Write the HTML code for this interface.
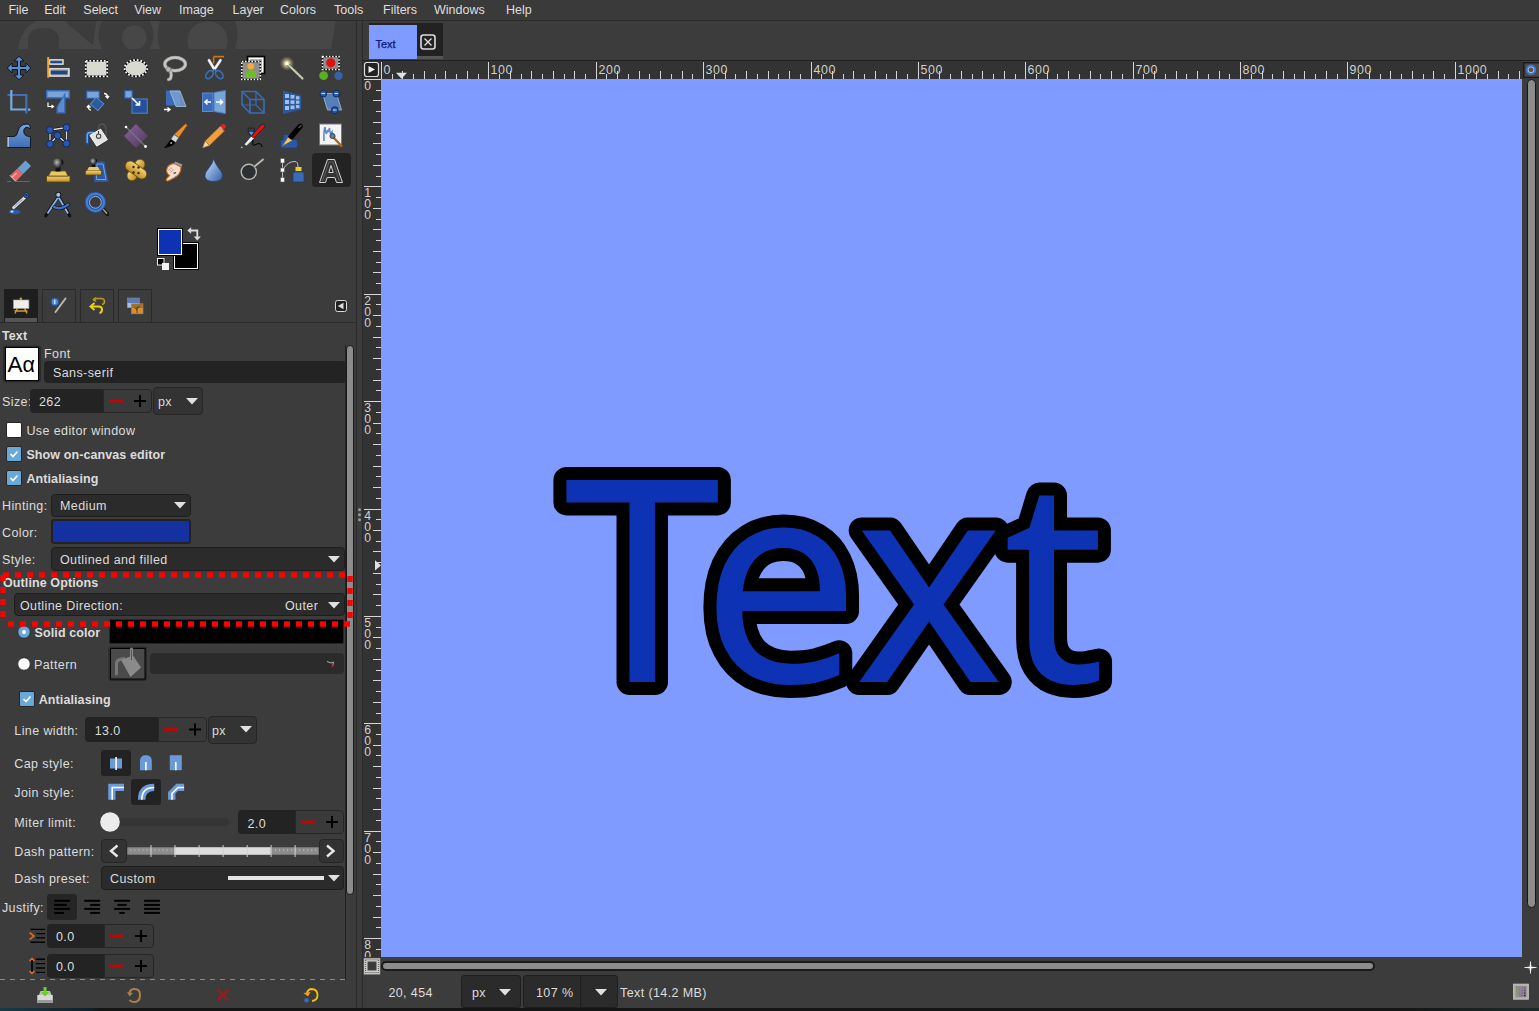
<!DOCTYPE html><html><head><meta charset="utf-8"><style>
html,body{margin:0;padding:0}
body{width:1539px;height:1011px;overflow:hidden;position:relative;background:#3c3c3c;font-family:"Liberation Sans",sans-serif}
.t{position:absolute;white-space:pre}
.r{position:absolute;box-sizing:border-box}
svg{position:absolute;overflow:visible}
</style></head><body>
<div class="r" style="left:0px;top:0px;width:1539px;height:20px;background:#3a3a3a;"></div>
<div class="r" style="left:0px;top:20px;width:1539px;height:1px;background:#2b2b2b;"></div>
<div class="t" style="left:8.4px;top:4.4px;font-size:12.5px;line-height:12.5px;color:#dedede;letter-spacing:0px;">File</div>
<div class="t" style="left:44.2px;top:4.4px;font-size:12.5px;line-height:12.5px;color:#dedede;letter-spacing:0px;">Edit</div>
<div class="t" style="left:83.3px;top:4.4px;font-size:12.5px;line-height:12.5px;color:#dedede;letter-spacing:0px;">Select</div>
<div class="t" style="left:134.2px;top:4.4px;font-size:12.5px;line-height:12.5px;color:#dedede;letter-spacing:0px;">View</div>
<div class="t" style="left:179px;top:4.4px;font-size:12.5px;line-height:12.5px;color:#dedede;letter-spacing:0px;">Image</div>
<div class="t" style="left:232.5px;top:4.4px;font-size:12.5px;line-height:12.5px;color:#dedede;letter-spacing:0px;">Layer</div>
<div class="t" style="left:280px;top:4.4px;font-size:12.5px;line-height:12.5px;color:#dedede;letter-spacing:0px;">Colors</div>
<div class="t" style="left:334px;top:4.4px;font-size:12.5px;line-height:12.5px;color:#dedede;letter-spacing:0px;">Tools</div>
<div class="t" style="left:383px;top:4.4px;font-size:12.5px;line-height:12.5px;color:#dedede;letter-spacing:0px;">Filters</div>
<div class="t" style="left:434px;top:4.4px;font-size:12.5px;line-height:12.5px;color:#dedede;letter-spacing:0px;">Windows</div>
<div class="t" style="left:506px;top:4.4px;font-size:12.5px;line-height:12.5px;color:#dedede;letter-spacing:0px;">Help</div>
<div class="r" style="left:356px;top:21px;width:1px;height:990px;background:#2a2a2a;"></div>
<div class="r" style="left:362px;top:21px;width:1px;height:990px;background:#2a2a2a;"></div>
<div class="r" style="left:173px;top:242px;width:26px;height:28px;background:#000;border:1px solid #000;box-shadow:inset 0 0 0 1px #fff"></div>
<div class="r" style="left:157px;top:228px;width:26px;height:28px;background:#0e32b4;border:1px solid #000;box-shadow:inset 0 0 0 1px #fff"></div>
<div class="r" style="left:4px;top:289px;width:34px;height:33px;background:#1e1e1e;"></div>
<div class="r" style="left:5px;top:318px;width:32px;height:4px;background:#555555;"></div>
<div class="r" style="left:42px;top:289px;width:34px;height:33px;background:#3c3c3c;border:1px solid #2a2a2a;border-bottom:none"></div>
<div class="r" style="left:80px;top:289px;width:34px;height:33px;background:#3c3c3c;border:1px solid #2a2a2a;border-bottom:none"></div>
<div class="r" style="left:118px;top:289px;width:34px;height:33px;background:#3c3c3c;border:1px solid #2a2a2a;border-bottom:none"></div>
<div class="r" style="left:0px;top:322px;width:356px;height:1px;background:#2a2a2a;"></div>
<div class="t" style="left:2px;top:330.4px;font-size:12.5px;line-height:12.5px;color:#dcdcdc;letter-spacing:0.1px;font-weight:bold;">Text</div>
<div class="t" style="left:44px;top:348.4px;font-size:12.5px;line-height:12.5px;color:#dcdcdc;letter-spacing:0.4px;">Font</div>
<div class="r" style="left:44px;top:361px;width:302px;height:22px;background:#232323;border-radius:4px"></div>
<div class="t" style="left:53px;top:367.4px;font-size:12.5px;line-height:12.5px;color:#dcdcdc;letter-spacing:0.4px;">Sans-serif</div>
<div class="t" style="left:2px;top:396.4px;font-size:12.5px;line-height:12.5px;color:#dcdcdc;letter-spacing:0.4px;">Size:</div>
<div class="r" style="left:30px;top:389px;width:73px;height:24px;background:#232323;border-radius:4px 0 0 4px"></div>
<div class="t" style="left:39px;top:396.4px;font-size:12.5px;line-height:12.5px;color:#dcdcdc;letter-spacing:0.4px;">262</div>
<div class="r" style="left:103px;top:389px;width:49px;height:24px;background:#3a3a3a;border:1px solid #262626;border-radius:0 4px 4px 0"></div>
<div class="r" style="left:153px;top:387px;width:50px;height:28px;background:#333333;border:1px solid #262626;border-radius:4px"></div>
<div class="t" style="left:158px;top:396.4px;font-size:12.5px;line-height:12.5px;color:#dcdcdc;letter-spacing:0.4px;">px</div>
<div class="r" style="left:6px;top:422px;width:16px;height:16px;background:#ffffff;border:1px solid #262626;border-radius:2px"></div>
<div class="t" style="left:26.4px;top:425.4px;font-size:12.5px;line-height:12.5px;color:#dcdcdc;letter-spacing:0.4px;">Use editor window</div>
<div class="r" style="left:6px;top:446px;width:16px;height:16px;background:#6aa8d8;border:1px solid #262626;border-radius:2px"></div>
<svg style="left:6px;top:446px" width="16" height="16"><path d="M4.5 8L7 10.5L11.5 5.5" stroke="#fff" stroke-width="1.6" fill="none"/></svg>
<div class="t" style="left:26.4px;top:449.4px;font-size:12.5px;line-height:12.5px;color:#dcdcdc;letter-spacing:0.1px;font-weight:bold;">Show on-canvas editor</div>
<div class="r" style="left:6px;top:470px;width:16px;height:16px;background:#6aa8d8;border:1px solid #262626;border-radius:2px"></div>
<svg style="left:6px;top:470px" width="16" height="16"><path d="M4.5 8L7 10.5L11.5 5.5" stroke="#fff" stroke-width="1.6" fill="none"/></svg>
<div class="t" style="left:26.4px;top:473.4px;font-size:12.5px;line-height:12.5px;color:#dcdcdc;letter-spacing:0.1px;font-weight:bold;">Antialiasing</div>
<div class="t" style="left:2px;top:500.4px;font-size:12.5px;line-height:12.5px;color:#dcdcdc;letter-spacing:0.4px;">Hinting:</div>
<div class="r" style="left:51px;top:494px;width:140px;height:23px;background:#2b2b2b;border:1px solid #1e1e1e;border-radius:4px"></div>
<div class="t" style="left:60px;top:500.4px;font-size:12.5px;line-height:12.5px;color:#dcdcdc;letter-spacing:0.4px;">Medium</div>
<div class="t" style="left:2px;top:527.4px;font-size:12.5px;line-height:12.5px;color:#dcdcdc;letter-spacing:0.4px;">Color:</div>
<div class="r" style="left:51px;top:519px;width:140px;height:25px;background:#1530a0;border:2px solid #222;border-radius:3px"></div>
<div class="t" style="left:2px;top:554.4px;font-size:12.5px;line-height:12.5px;color:#dcdcdc;letter-spacing:0.4px;">Style:</div>
<div class="r" style="left:51px;top:547px;width:294px;height:24px;background:#2b2b2b;border:1px solid #1e1e1e;border-radius:4px"></div>
<div class="t" style="left:60px;top:554.4px;font-size:12.5px;line-height:12.5px;color:#dcdcdc;letter-spacing:0.4px;">Outlined and filled</div>
<div class="t" style="left:3px;top:577.4px;font-size:12.5px;line-height:12.5px;color:#dcdcdc;letter-spacing:0.1px;font-weight:bold;">Outline Options</div>
<div class="r" style="left:14px;top:593px;width:331px;height:23px;background:#2b2b2b;border:1px solid #1e1e1e;border-radius:4px"></div>
<div class="t" style="left:20px;top:600.4px;font-size:12.5px;line-height:12.5px;color:#dcdcdc;letter-spacing:0.4px;">Outline Direction:</div>
<div class="t" style="left:285px;top:600.4px;font-size:12.5px;line-height:12.5px;color:#dcdcdc;letter-spacing:0.4px;">Outer</div>
<svg style="left:17px;top:625px" width="14" height="14"><circle cx="7" cy="7" r="6.3" fill="#6aa8d8" stroke="#2a2a2a"/><circle cx="7" cy="7" r="2" fill="#fff"/></svg>
<div class="t" style="left:34.6px;top:627.4px;font-size:12.5px;line-height:12.5px;color:#dcdcdc;letter-spacing:0.1px;font-weight:bold;">Solid color</div>
<div class="r" style="left:109px;top:619px;width:235px;height:25px;background:#000;border:1px solid #262626;border-radius:2px"></div>
<svg style="left:17px;top:657px" width="14" height="14"><circle cx="7" cy="7" r="6.3" fill="#fff" stroke="#2a2a2a"/></svg>
<div class="t" style="left:34px;top:659.4px;font-size:12.5px;line-height:12.5px;color:#dcdcdc;letter-spacing:0.4px;">Pattern</div>
<div class="r" style="left:150px;top:653px;width:194px;height:21px;background:#2b2b2b;border-radius:4px"></div>
<div class="r" style="left:19px;top:691px;width:16px;height:16px;background:#6aa8d8;border:1px solid #262626;border-radius:2px"></div>
<svg style="left:19px;top:691px" width="16" height="16"><path d="M4.5 8L7 10.5L11.5 5.5" stroke="#fff" stroke-width="1.6" fill="none"/></svg>
<div class="t" style="left:38.7px;top:694.4px;font-size:12.5px;line-height:12.5px;color:#dcdcdc;letter-spacing:0.1px;font-weight:bold;">Antialiasing</div>
<div class="t" style="left:14.3px;top:725.4px;font-size:12.5px;line-height:12.5px;color:#dcdcdc;letter-spacing:0.4px;">Line width:</div>
<div class="r" style="left:85px;top:717px;width:73px;height:25px;background:#232323;border-radius:4px 0 0 4px"></div>
<div class="t" style="left:94.7px;top:725.4px;font-size:12.5px;line-height:12.5px;color:#dcdcdc;letter-spacing:0.4px;">13.0</div>
<div class="r" style="left:158px;top:717px;width:49px;height:25px;background:#3a3a3a;border:1px solid #262626;border-radius:0 4px 4px 0"></div>
<div class="r" style="left:208px;top:716px;width:49px;height:28px;background:#333333;border:1px solid #262626;border-radius:4px"></div>
<div class="t" style="left:212px;top:725.4px;font-size:12.5px;line-height:12.5px;color:#dcdcdc;letter-spacing:0.4px;">px</div>
<div class="t" style="left:14.3px;top:758.4px;font-size:12.5px;line-height:12.5px;color:#dcdcdc;letter-spacing:0.4px;">Cap style:</div>
<div class="r" style="left:101px;top:750px;width:30px;height:26px;background:#222;border-radius:3px"></div>
<div class="t" style="left:14.3px;top:787.4px;font-size:12.5px;line-height:12.5px;color:#dcdcdc;letter-spacing:0.4px;">Join style:</div>
<div class="r" style="left:131px;top:779px;width:30px;height:26px;background:#222;border-radius:3px"></div>
<div class="t" style="left:14.3px;top:817.4px;font-size:12.5px;line-height:12.5px;color:#dcdcdc;letter-spacing:0.4px;">Miter limit:</div>
<div class="r" style="left:110px;top:818px;width:119px;height:8px;background:#353535;border-radius:4px"></div>
<svg style="left:0;top:0" width="1" height="1"><circle cx="110" cy="822" r="9.8" fill="#ececec"/></svg>
<div class="r" style="left:238px;top:810px;width:57px;height:24px;background:#232323;border-radius:4px 0 0 4px"></div>
<div class="t" style="left:247.5px;top:818.4px;font-size:12.5px;line-height:12.5px;color:#dcdcdc;letter-spacing:0.4px;">2.0</div>
<div class="r" style="left:295px;top:810px;width:49px;height:24px;background:#3a3a3a;border:1px solid #262626;border-radius:0 4px 4px 0"></div>
<div class="t" style="left:14.3px;top:846.4px;font-size:12.5px;line-height:12.5px;color:#dcdcdc;letter-spacing:0.4px;">Dash pattern:</div>
<div class="r" style="left:101px;top:839px;width:26px;height:24px;background:#333;border:1px solid #262626;border-radius:4px"></div>
<div class="r" style="left:319px;top:839px;width:25px;height:24px;background:#333;border:1px solid #262626;border-radius:4px"></div>
<div class="t" style="left:14.3px;top:873.4px;font-size:12.5px;line-height:12.5px;color:#dcdcdc;letter-spacing:0.4px;">Dash preset:</div>
<div class="r" style="left:101px;top:866px;width:243px;height:24px;background:#2b2b2b;border:1px solid #1e1e1e;border-radius:4px"></div>
<div class="t" style="left:110px;top:873.4px;font-size:12.5px;line-height:12.5px;color:#dcdcdc;letter-spacing:0.4px;">Custom</div>
<div class="r" style="left:228px;top:876px;width:96px;height:4px;background:#e4e4e4;"></div>
<div class="t" style="left:1.9px;top:902.4px;font-size:12.5px;line-height:12.5px;color:#dcdcdc;letter-spacing:0.4px;">Justify:</div>
<div class="r" style="left:47px;top:894px;width:30px;height:26px;background:#252525;border-radius:3px"></div>
<div class="r" style="left:47px;top:924px;width:57px;height:24px;background:#232323;border-radius:4px 0 0 4px"></div>
<div class="t" style="left:56px;top:931.4px;font-size:12.5px;line-height:12.5px;color:#dcdcdc;letter-spacing:0.4px;">0.0</div>
<div class="r" style="left:104px;top:924px;width:50px;height:24px;background:#3a3a3a;border:1px solid #262626;border-radius:0 4px 4px 0"></div>
<div class="r" style="left:47px;top:954px;width:57px;height:24px;background:#232323;border-radius:4px 0 0 4px"></div>
<div class="t" style="left:56px;top:961.4px;font-size:12.5px;line-height:12.5px;color:#dcdcdc;letter-spacing:0.4px;">0.0</div>
<div class="r" style="left:104px;top:954px;width:50px;height:24px;background:#3a3a3a;border:1px solid #262626;border-radius:0 4px 4px 0"></div>
<div class="r" style="left:345px;top:345px;width:1px;height:635px;background:#222;"></div>
<div class="r" style="left:346px;top:345px;width:8px;height:550px;background:#8c8c8c;border:1px solid #1a1a1a;border-radius:4px"></div>
<svg style="left:0;top:0" width="360" height="330"><defs>
<linearGradient id="gBlue" x1="0" y1="0" x2="0" y2="1"><stop offset="0" stop-color="#79a6dc"/><stop offset="1" stop-color="#3d6db5"/></linearGradient>
<linearGradient id="gGold" x1="0" y1="0" x2="0" y2="1"><stop offset="0" stop-color="#f3d27a"/><stop offset="1" stop-color="#c0901e"/></linearGradient>
<radialGradient id="gGlow"><stop offset="0" stop-color="#fff6d0"/><stop offset="0.35" stop-color="#e8d8a0" stop-opacity="0.8"/><stop offset="1" stop-color="#8a7a50" stop-opacity="0"/></radialGradient>
<radialGradient id="gKnob" cx="0.4" cy="0.3"><stop offset="0" stop-color="#bbb"/><stop offset="1" stop-color="#111"/></radialGradient>
<linearGradient id="gDrop" x1="0" y1="0" x2="1" y2="1"><stop offset="0" stop-color="#cfe4ff"/><stop offset="1" stop-color="#2f5fa8"/></linearGradient>
<linearGradient id="gPurp" x1="0" y1="0" x2="1" y2="1"><stop offset="0" stop-color="#8a62a0"/><stop offset="1" stop-color="#4e3a5a"/></linearGradient>
</defs><path transform="translate(7,56)" d="M12 0.3L17 5H13.5V10.5H19V7L23.7 12L19 17V13.5H13.5V19H17L12 23.7L7 19H10.5V13.5H5V17L0.3 12L5 7V10.5H10.5V5H7Z" fill="#5a8ed2" stroke="#0b1320" stroke-width="1"/><rect x="47.2" y="57.1" width="2" height="20.6" fill="#f0a830"/><rect x="49.2" y="59.1" width="14.7" height="5.8" fill="#8c8c86"/><rect x="49.8" y="59.8" width="13.2" height="4.4" fill="none" stroke="#e8eef8" stroke-width="1"/><rect x="50.4" y="61.2" width="11.6" height="1.8" fill="#1a4690"/><rect x="49.2" y="67.9" width="20.7" height="9" fill="#8c8c86"/><rect x="49.9" y="68.8" width="19" height="7.2" fill="none" stroke="#e8eef8" stroke-width="1.2"/><rect x="50.8" y="70.8" width="16.4" height="3.4" fill="#1a4690"/><rect x="85.8" y="60.8" width="21.4" height="15.6" fill="#d8dad2" stroke="#000" stroke-width="1.8"/><rect x="85.8" y="60.8" width="21.4" height="15.6" fill="none" stroke="#fff" stroke-width="1.8" stroke-dasharray="1.8 1.8"/><ellipse cx="135.9" cy="68.2" rx="11.3" ry="8.2" fill="#d8dad2" stroke="#000" stroke-width="1.8"/><ellipse cx="135.9" cy="68.2" rx="11.3" ry="8.2" fill="none" stroke="#fff" stroke-width="1.8" stroke-dasharray="1.8 1.8"/><g fill="none" stroke-linecap="round"><ellipse cx="175.1" cy="64.1" rx="10.3" ry="6.6" stroke="#8a8a86" stroke-width="3.6"/><ellipse cx="175.1" cy="64.1" rx="10.3" ry="6.6" stroke="#c6c6c2" stroke-width="2.4"/><path d="M170.5 71Q172 75 170.5 78.5Q169.5 79.5 168.5 79.5" stroke="#8a8a86" stroke-width="3.4"/><path d="M170.5 71Q172 75 170.5 78.5Q169.5 79.5 168.5 79.5" stroke="#c6c6c2" stroke-width="2.2"/><circle cx="168.5" cy="69.5" r="2.4" fill="#b8b8b4" stroke="#8a8a86" stroke-width="0.8"/></g><path d="M213.6 56.6H224M213.6 56.6V63.5" stroke="#c86a10" stroke-width="1.6" fill="none"/><path d="M215.5 56.6H224M213.6 58.5V63.5" stroke="#f0a020" stroke-width="0.9" stroke-dasharray="0.9 2.1" fill="none"/><path d="M209 60.3L214.4 69.3M220.4 60.3L214.4 69.3" stroke="#777" stroke-width="3.3" stroke-linecap="round"/><path d="M209 60.3L214.4 69.3M220.4 60.3L214.4 69.3" stroke="#f2f2f2" stroke-width="2.4" stroke-linecap="round"/><ellipse cx="209.5" cy="74.6" rx="4.6" ry="3" transform="rotate(-50 209.5 74.6)" fill="none" stroke="#3a70c0" stroke-width="1.6"/><ellipse cx="219.3" cy="74.6" rx="4.6" ry="3" transform="rotate(50 219.3 74.6)" fill="none" stroke="#3a70c0" stroke-width="1.6"/><path d="M214.4 69.5L212.5 71.5M214.4 69.5L216.3 71.5" stroke="#3a70c0" stroke-width="1.4"/><rect x="247.5" y="56.5" width="17" height="17" fill="#ddd" stroke="#000" stroke-width="1.6"/><rect x="249.5" y="58.5" width="13" height="13" fill="#bbb" stroke="#fff" stroke-width="1"/><rect x="241.8" y="61.5" width="18.5" height="18" fill="#8e8e8e" stroke="#000" stroke-width="1.6"/><rect x="241.8" y="61.5" width="18.5" height="18" fill="none" stroke="#fff" stroke-width="1.6" stroke-dasharray="1.6 1.6"/><path d="M245.5 78Q245.5 70 251 70Q256.5 70 256.5 78Z" fill="#6cc026"/><circle cx="250.8" cy="66.3" r="3.3" fill="#f5a640"/><circle cx="287" cy="63.5" r="7.5" fill="url(#gGlow)"/><path d="M287.5 64L302.5 78.5" stroke="#56584c" stroke-width="3" stroke-linecap="round"/><path d="M287.5 64L302.5 78.5" stroke="#c9ccb4" stroke-width="1.8" stroke-linecap="round"/><circle cx="287" cy="63.5" r="1.8" fill="#fff"/><rect x="322.5" y="56.5" width="16.5" height="13" fill="#8e8e8e" stroke="#000" stroke-width="1.6"/><rect x="322.5" y="56.5" width="16.5" height="13" fill="none" stroke="#fff" stroke-width="1.6" stroke-dasharray="1.6 1.6"/><circle cx="330.8" cy="62.8" r="4.6" fill="#e01010"/><circle cx="323.6" cy="75.7" r="4.4" fill="#58b020"/><circle cx="338.5" cy="75.7" r="4.2" fill="#3562a8"/><path d="M7.5 95H26.3V113.5" fill="none" stroke="#3f6fb8" stroke-width="2.2"/><path d="M11.3 92V109.5H26" fill="none" stroke="#79a8e6" stroke-width="2.2"/><rect x="10.3" y="90" width="2.2" height="2.2" fill="#79a8e6"/><rect x="28" y="108.5" width="2.3" height="2.3" fill="#79a8e6"/><rect x="46" y="90" width="24" height="8.6" fill="#3c6cb8"/><rect x="47.5" y="91.5" width="21" height="5.6" fill="#79a4d8"/><path d="M65.5 92L56.5 107V113.5H65.5Z" fill="#3c6cb8"/><path d="M64 96L58 107V112H64Z" fill="#5b8ad0"/><path d="M48 102.5V106.5H53M51.5 105L53.5 106.5L51.5 108" fill="none" stroke="#fff" stroke-width="1.2"/><rect x="86.5" y="91" width="13" height="7.5" fill="#79a4d8" stroke="#2c5aa0" stroke-width="1.4"/><rect x="92" y="99.5" width="10" height="9" transform="rotate(40 97 104)" fill="#2c5aa0" stroke="#5c8ad0" stroke-width="1"/><path d="M104 93.5Q107.5 93.5 107.5 97.5M105.5 96L107.5 98L109 96" fill="none" stroke="#fff" stroke-width="1.3"/><path d="M91 110Q88 110 88.5 106M86.8 107.5L88.5 105.5L90.5 107.5" fill="none" stroke="#fff" stroke-width="1.3"/><rect x="124.7" y="90.5" width="7.6" height="7.6" fill="#79a4d8" stroke="#2c5aa0" stroke-width="1.2"/><rect x="132" y="99" width="15.3" height="14.2" fill="#24519a" stroke="#4a7cc4" stroke-width="1.2"/><path d="M132 98L139 105M135.5 105H139.5V101" fill="none" stroke="#fff" stroke-width="1.6"/><rect x="166" y="90.5" width="14" height="15" fill="#3c6cb8"/><path d="M170 91H180L186 106.5H176Z" fill="#79a4d8" fill-opacity="0.8" stroke="#a8c0e0" stroke-width="0.8"/><path d="M164 109.5H169.5M167.5 107.5L170 109.5L167.5 111.5" fill="none" stroke="#fff" stroke-width="1.4"/><rect x="202.5" y="93" width="10.5" height="18.5" fill="#3c6cb8" stroke="#5c8ad0" stroke-width="1"/><path d="M214 92.5L225.5 90.5V113.5L214 111.5Z" fill="#79a4d8" stroke="#4a7cc4" stroke-width="1"/><path d="M211 102H205M207.5 99.5L205 102L207.5 104.5" fill="none" stroke="#fff" stroke-width="1.6"/><path d="M216 102H222.5M220 99.5L222.5 102L220 104.5" fill="none" stroke="#fff" stroke-width="1.6"/><g fill="none" stroke="#3a6ab2" stroke-width="1.7"><path d="M242 91.5H256L264 99.5V113H250L242 105Z"/><path d="M242 91.5L250 99.5H264M250 99.5V113"/><path d="M256 91.5V105H242M256 105L264 113" stroke-width="1.2"/></g><path d="M283 90.5L301 95.5V109.5L283 114Z" fill="#2c5aa0"/><g fill="#9cc0ea"><rect x="285" y="94" width="4" height="4"/><rect x="290.5" y="95" width="4" height="3.6"/><rect x="296" y="96.2" width="3.4" height="3.2"/><rect x="285" y="100" width="4" height="4"/><rect x="290.5" y="100.3" width="4" height="3.6"/><rect x="296" y="100.6" width="3.4" height="3.2"/><rect x="285" y="106" width="4" height="4"/><rect x="290.5" y="105.5" width="4" height="3.6"/><rect x="296" y="105" width="3.4" height="3.2"/></g><path d="M322.5 93.5H336.5L341.5 110H327.5Z" fill="#5b8ad0" fill-opacity="0.85" stroke="#a8c0e0" stroke-width="0.8"/><g fill="#2a5aa8" stroke="#0d2a60" stroke-width="1"><circle cx="323.2" cy="93.6" r="3.4"/><circle cx="336.3" cy="93.6" r="3.4"/><circle cx="334.8" cy="110.2" r="3.4"/></g><path d="M321.5 93.5H325M334.5 93.5H338M333 110H336.5" stroke="#fff" stroke-width="0.8"/><path d="M7.5 147.5V136.5H14Q17 136.5 18 131Q20 124 27 124Q31 124.5 30 129Q28 126.5 25.5 127.5Q23 129 24 133Q25 136.5 30.5 136.5V147.5Z" fill="url(#gBlue)" stroke="#0e1826" stroke-width="1"/><path d="M8 147V137" stroke="#fff" stroke-width="1"/><path d="M50 130L66.5 127.5V143.5L57.5 135.5L50 144Z" fill="none" stroke="#111" stroke-width="2.6"/><path d="M50 130L66.5 127.5V143.5L57.5 135.5L50 144Z" fill="none" stroke="#ddd" stroke-width="1.3"/><g fill="#2858b0" stroke="#0b2560" stroke-width="0.9"><circle cx="50" cy="130" r="3.5"/><circle cx="66.5" cy="127.5" r="3.5"/><circle cx="57.5" cy="135.5" r="3.5"/><circle cx="50" cy="144" r="3.5"/><circle cx="66.5" cy="143.5" r="3.5"/></g><path d="M87.2 143V135.2Q87.2 132.4 90 132.4H94" fill="none" stroke="#1e4890" stroke-width="4" stroke-linecap="round"/><path d="M87.2 142.5V135.2Q87.2 132.6 90 132.6H93.5" fill="none" stroke="#70a0e0" stroke-width="1.6" stroke-linecap="round"/><path d="M98.5 131Q98 124 102 124Q106 124 106 131V136" fill="none" stroke="#555550" stroke-width="1.3"/><path d="M89.9 135.4L100.6 129.2L107.4 139.6L96.8 146.1Z" fill="#e4e4e4" stroke="#fafafa" stroke-width="1"/><path d="M98.5 131V134" stroke="#444" stroke-width="1.1"/><circle cx="98.6" cy="136.2" r="2.2" fill="#ddd" stroke="#444" stroke-width="1.1"/><path d="M136 124L148 136L136 148L124 136Z" fill="url(#gPurp)"/><path d="M126 127L145.5 146.5" stroke="#777" stroke-width="1.3"/><circle cx="126" cy="127" r="1.3" fill="#fff"/><circle cx="145.5" cy="146.5" r="1.4" fill="#fff"/><path d="M185.5 123.8L187.3 125.3L178.8 137.6L174 134.4Z" fill="#e8902a" stroke="#8a4a10" stroke-width="0.8"/><path d="M174 134.4L178.8 137.6L175.6 142.6L170.8 139.2Z" fill="#d8d8d8" stroke="#555" stroke-width="0.7"/><path d="M170.8 139.2L175.6 142.6Q172 147.2 164 148Q167.8 143.5 170.8 139.2Z" fill="#000"/><circle cx="171.2" cy="143" r="1" fill="#aaa"/><path d="M205 141L220 126.5L224.5 131L209.5 145.5Z" fill="#f0a040" stroke="#9a5a10" stroke-width="0.8"/><path d="M219.5 127L222.5 124Q225.5 123.5 226 126.5L223.5 130Z" fill="#e82020"/><path d="M205 141L209.5 145.5L202.5 148Z" fill="#f0d8a0" stroke="#8a6a30" stroke-width="0.6"/><rect x="219" y="127" width="3" height="3" transform="rotate(45 220.5 128.5)" fill="#aaa"/><path d="M252.5 137L263 126" stroke="#123" stroke-width="4.4" stroke-linecap="round"/><path d="M252.5 137L263 126" stroke="#ff0a0a" stroke-width="3" stroke-linecap="round"/><path d="M248.3 132.5V128.2H254.2V132.5L251.3 136Z" fill="none" stroke="#1a2a30" stroke-width="1.2"/><path d="M248.8 132L253.8 132L251.3 135.5Z" fill="#5a90e0"/><path d="M244 144.5L251 136.2L254.5 138.5L246.5 146Z" fill="#f0f0ec" stroke="#203038" stroke-width="0.8"/><path d="M243.5 145.5L241.8 147.2" stroke="#203038" stroke-width="1"/><circle cx="241.8" cy="147.3" r="0.9" fill="#9ac0f0"/><path d="M253.2 139.5Q252 145.5 253.5 145.5Q256 144 259 143.5Q262 143.8 262 147" fill="none" stroke="#000" stroke-width="1"/><path d="M283.6 134.5H289.5V139.5H295.5Q297.5 139.5 297.5 141.5V146.5Q297.5 148 296 148H282Q280.5 148 280.5 146.5V141.5Q280.5 139.5 282.5 139.5H283.6Z" fill="#2a58a8" stroke="#1a3a78" stroke-width="0.6"/><path d="M290.8 137.3L300.2 126.2" stroke="#000" stroke-width="5.2" stroke-linecap="round"/><path d="M299 127.5L301 125.5" stroke="#555" stroke-width="1.4" stroke-linecap="round"/><path d="M282.3 146L288 137.2L292.3 140.6Z" fill="#e8c878" stroke="#8a6a20" stroke-width="0.6"/><rect x="319.5" y="124" width="22" height="21" fill="#f4f4f4" stroke="#777" stroke-width="1"/><path d="M324 141Q323.5 131 325 127Q326 138 327.5 130Q328 134 329.5 128Q330 136 332 132Q333 138 335 136" fill="none" stroke="#5a8ad0" stroke-width="1.6"/><path d="M333 137L341.5 146" stroke="#a86a18" stroke-width="2.4" stroke-linecap="round"/><circle cx="332.5" cy="136" r="2.6" fill="#5a7ab0" stroke="#333" stroke-width="0.8"/><path d="M17.5 168.5L25.5 160.5L31 166L23 174Z" fill="#6aa0d0"/><path d="M17.5 168.5L23 174L16 181.5L10 175.5Z" fill="#e06868"/><path d="M10 175.5L12 177.5L16.5 173M12 177.5L16 181.5" stroke="#fff" stroke-width="0.8" fill="none"/><path d="M7 181.5H11M14 181.5H30" stroke="#666" stroke-width="1.2"/><rect x="46.5" y="176" width="23.5" height="6" fill="url(#gGold)" stroke="#5a4010" stroke-width="0.8"/><path d="M48.5 176L51 171H65.5L68 176Z" fill="#e8c868" stroke="#6a5010" stroke-width="0.8"/><path d="M55.5 171.5V166Q52 164 52.5 162Q53 158.5 58 158.5Q63 158.5 63.5 162Q64 164 60.5 166V171.5Z" fill="url(#gKnob)"/><path d="M95 161.5H104.5L108.5 182H94Z" fill="#2c5aa0"/><path d="M97 164H103L106 179.5H96.5Z" fill="none" stroke="#79a4d8" stroke-width="1"/><rect x="85.5" y="170.5" width="16" height="4.5" fill="url(#gGold)" stroke="#5a4010" stroke-width="0.7"/><path d="M87 170.5L89 167H98L100 170.5Z" fill="#e8c868"/><path d="M91.8 167V163Q89.5 162 89.8 160.5Q90.2 158.3 93.5 158.3Q96.8 158.3 97.2 160.5Q97.5 162 95.2 163V167Z" fill="url(#gKnob)"/><g transform="rotate(-55 136 170)"><rect x="124" y="165" width="24" height="10" rx="5" fill="url(#gGold)" stroke="#6a4a10" stroke-width="0.8"/></g><g transform="rotate(35 136 170)"><rect x="124" y="165" width="24" height="10" rx="5" fill="url(#gGold)" stroke="#6a4a10" stroke-width="0.8"/></g><g fill="#3a2a10"><circle cx="133.5" cy="167" r="1.2"/><circle cx="138.5" cy="167.5" r="1.2"/><circle cx="133.5" cy="172.5" r="1.2"/><circle cx="138.5" cy="173" r="1.2"/></g><path d="M175 161.5L182.5 164.5L180.5 168.5L173 165.5Z" fill="#9a9a9a"/><path d="M167.5 167Q171 162.5 175.5 164L181 167Q181 173 177 176L173 178.5L168.5 180.8Q165.5 181.5 166.5 178.8L169.5 175.5Q165 172.5 167.5 167Z" fill="#f0ddd4" stroke="#c06a20" stroke-width="1.1"/><path d="M168.5 168.5L172 172M170 166.8L173.5 170.3M168 171L171 168M170 173L173.5 169.5" stroke="#c09080" stroke-width="0.6"/><path d="M173.5 173.5L176 172.5" stroke="#8a5a20" stroke-width="1.4"/><path d="M213.8 158.5Q214.5 163 219 168.5Q223 173 222.5 176.5Q221.5 181.5 213.8 181.5Q206 181.5 205 176.5Q204.5 173 208.5 168.5Q213 163 213.8 158.5Z" fill="url(#gDrop)" stroke="#1e3e70" stroke-width="0.7"/><circle cx="248.8" cy="171.8" r="7.6" fill="#2b3034" stroke="#b8b8b0" stroke-width="1.4"/><path d="M254.5 166.5L263 159.5" stroke="#666" stroke-width="2.6" stroke-linecap="round"/><path d="M254.5 166.5L263 159.5" stroke="#c8c8b8" stroke-width="1.4" stroke-linecap="round"/><path d="M282.5 161V179.5M282.5 170Q288 161 295 161.5Q298 161.5 298 167" fill="none" stroke="#ccc" stroke-width="0.9"/><g fill="#fff" stroke="#555" stroke-width="0.6"><rect x="280.5" y="158.5" width="4" height="4.5"/><rect x="280.5" y="168" width="4" height="4"/><rect x="280.5" y="177.5" width="4" height="4.5"/></g><rect x="295.5" y="167" width="6" height="4" fill="#f0d020"/><path d="M294.5 172H302.5Q304 172 304 174V182H293V174Q293 172 294.5 172Z" fill="#3a6ab8" stroke="#1a3a70" stroke-width="0.7"/><rect x="312" y="153" width="39" height="34" rx="4" fill="#232323"/><path d="M319.5 182.5L327.5 159.5H334.5L342.5 182.5H336.5L334.8 177.5H327.2L325.5 182.5ZM328.8 172.5H333.2L331 165.5Z" fill="#333" stroke="#e6e6e6" stroke-width="0.9"/><path d="M322.5 181L329 162H333L339.5 181" fill="none" stroke="#777" stroke-width="0.6"/><path d="M13.6 207.6L24.7 197.6" stroke="#333" stroke-width="4.2" stroke-linecap="round"/><path d="M13.6 207.6L24.7 197.6" stroke="#d8d8d4" stroke-width="3" stroke-linecap="round"/><path d="M14.5 206.5L22.5 199.5" stroke="#6a9ae0" stroke-width="1"/><circle cx="26.4" cy="195.2" r="2.6" fill="#3462a8" stroke="#1a3060" stroke-width="1"/><circle cx="26.4" cy="195.2" r="0.9" fill="#0e1e40"/><ellipse cx="14.6" cy="211.9" rx="5.8" ry="2.4" fill="#2a5ab0"/><ellipse cx="12" cy="211.6" rx="1.6" ry="1.1" fill="#cfe0ff"/><path d="M58.4 196.5L45.8 215.8M58.4 196.5L69.8 215.8" stroke="#111" stroke-width="3.2" stroke-linecap="round"/><path d="M58.4 197L47.5 213.5M58.4 197L68 213.5" stroke="#8ab4f0" stroke-width="1.8"/><path d="M53 206.3Q60 211.5 69.5 203.5" stroke="#111" stroke-width="3.8" fill="none"/><path d="M53.3 206.5Q60 210.8 69 204" stroke="#3a70c8" stroke-width="2.4" fill="none"/><circle cx="58.3" cy="194.8" r="2.6" fill="#8ab4f0" stroke="#111" stroke-width="1"/><rect x="57.8" y="193.6" width="1" height="2.4" fill="#f0d0a0"/><path d="M103.2 209.3L107.4 214.2" stroke="#1a1a1a" stroke-width="4" stroke-linecap="round"/><path d="M103.6 209.8L106.6 213.2" stroke="#a8a898" stroke-width="1.4" stroke-linecap="round"/><circle cx="95.4" cy="202.3" r="8.1" fill="none" stroke="#2656a8" stroke-width="5"/><circle cx="95.4" cy="202.3" r="8.6" fill="none" stroke="#4a80d0" stroke-width="2"/><circle cx="95.4" cy="202.3" r="5.9" fill="none" stroke="#c0d4f0" stroke-width="0.7"/></svg>
<div class="r" style="left:369px;top:23px;width:74px;height:36px;background:#222222;"></div>
<div class="r" style="left:369px;top:25px;width:48px;height:34px;background:#7f9bff;"></div>
<div class="r" style="left:417px;top:56px;width:26px;height:3px;background:#555555;"></div>
<div class="t" style="left:375.5px;top:38.7px;font-size:11px;line-height:11px;color:#08176e;letter-spacing:0px;-webkit-text-stroke:0.25px #08176e;">Text</div>
<svg style="left:420px;top:34px" width="16" height="16"><rect x="1" y="1" width="14" height="14" rx="2.5" fill="none" stroke="#ddd" stroke-width="1.6"/><path d="M4.5 4.5L11.5 11.5M11.5 4.5L4.5 11.5" stroke="#ddd" stroke-width="1.4"/></svg>
<div class="r" style="left:362px;top:60px;width:1177px;height:1px;background:#202020;"></div>
<div class="r" style="left:363px;top:61px;width:1160px;height:18px;background:#333333;"></div>
<div class="r" style="left:363px;top:61px;width:18px;height:897px;background:#333333;"></div>
<svg style="left:0;top:0" width="1539" height="1011" font-family="Liberation Sans"><clipPath id="rclip"><rect x="362" y="60" width="1160" height="897"/></clipPath><g clip-path="url(#rclip)"><path d="M381.5 62V79 M392.5 74V79 M402.5 71V79 M413.5 74V79 M424.5 71V79 M435.5 74V79 M445.5 71V79 M456.5 74V79 M467.5 71V79 M478.5 74V79 M488.5 62V79 M499.5 74V79 M510.5 71V79 M521.5 74V79 M531.5 71V79 M542.5 74V79 M553.5 71V79 M564.5 74V79 M574.5 71V79 M585.5 74V79 M596.5 62V79 M606.5 74V79 M617.5 71V79 M628.5 74V79 M639.5 71V79 M649.5 74V79 M660.5 71V79 M671.5 74V79 M682.5 71V79 M692.5 74V79 M703.5 62V79 M714.5 74V79 M725.5 71V79 M735.5 74V79 M746.5 71V79 M757.5 74V79 M768.5 71V79 M778.5 74V79 M789.5 71V79 M800.5 74V79 M811.5 62V79 M821.5 74V79 M832.5 71V79 M843.5 74V79 M853.5 71V79 M864.5 74V79 M875.5 71V79 M886.5 74V79 M896.5 71V79 M907.5 74V79 M918.5 62V79 M929.5 74V79 M939.5 71V79 M950.5 74V79 M961.5 71V79 M972.5 74V79 M982.5 71V79 M993.5 74V79 M1004.5 71V79 M1015.5 74V79 M1025.5 62V79 M1036.5 74V79 M1047.5 71V79 M1057.5 74V79 M1068.5 71V79 M1079.5 74V79 M1090.5 71V79 M1100.5 74V79 M1111.5 71V79 M1122.5 74V79 M1133.5 62V79 M1143.5 74V79 M1154.5 71V79 M1165.5 74V79 M1176.5 71V79 M1186.5 74V79 M1197.5 71V79 M1208.5 74V79 M1219.5 71V79 M1229.5 74V79 M1240.5 62V79 M1251.5 74V79 M1262.5 71V79 M1272.5 74V79 M1283.5 71V79 M1294.5 74V79 M1304.5 71V79 M1315.5 74V79 M1326.5 71V79 M1337.5 74V79 M1347.5 62V79 M1358.5 74V79 M1369.5 71V79 M1380.5 74V79 M1390.5 71V79 M1401.5 74V79 M1412.5 71V79 M1423.5 74V79 M1433.5 71V79 M1444.5 74V79 M1455.5 62V79 M1466.5 74V79 M1476.5 71V79 M1487.5 74V79 M1498.5 71V79 M1508.5 74V79 M1519.5 71V79" stroke="#d6d6d6" stroke-width="1" fill="none"/><text x="383.6" y="74" font-size="12.4" letter-spacing="0.5" fill="#d0d0d0">0</text><text x="490.6" y="74" font-size="12.4" letter-spacing="0.5" fill="#d0d0d0">100</text><text x="598.6" y="74" font-size="12.4" letter-spacing="0.5" fill="#d0d0d0">200</text><text x="705.6" y="74" font-size="12.4" letter-spacing="0.5" fill="#d0d0d0">300</text><text x="813.6" y="74" font-size="12.4" letter-spacing="0.5" fill="#d0d0d0">400</text><text x="920.6" y="74" font-size="12.4" letter-spacing="0.5" fill="#d0d0d0">500</text><text x="1027.6" y="74" font-size="12.4" letter-spacing="0.5" fill="#d0d0d0">600</text><text x="1135.6" y="74" font-size="12.4" letter-spacing="0.5" fill="#d0d0d0">700</text><text x="1242.6" y="74" font-size="12.4" letter-spacing="0.5" fill="#d0d0d0">800</text><text x="1349.6" y="74" font-size="12.4" letter-spacing="0.5" fill="#d0d0d0">900</text><text x="1457.6" y="74" font-size="12.4" letter-spacing="0.5" fill="#d0d0d0">1000</text><path d="M364 79.5H381 M376 90.5H381 M373 100.5H381 M376 111.5H381 M373 122.5H381 M376 133.5H381 M373 143.5H381 M376 154.5H381 M373 165.5H381 M376 176.5H381 M364 186.5H381 M376 197.5H381 M373 208.5H381 M376 219.5H381 M373 229.5H381 M376 240.5H381 M373 251.5H381 M376 262.5H381 M373 272.5H381 M376 283.5H381 M364 294.5H381 M376 304.5H381 M373 315.5H381 M376 326.5H381 M373 337.5H381 M376 347.5H381 M373 358.5H381 M376 369.5H381 M373 380.5H381 M376 390.5H381 M364 401.5H381 M376 412.5H381 M373 423.5H381 M376 433.5H381 M373 444.5H381 M376 455.5H381 M373 466.5H381 M376 476.5H381 M373 487.5H381 M376 498.5H381 M364 509.5H381 M376 519.5H381 M373 530.5H381 M376 541.5H381 M373 551.5H381 M376 562.5H381 M373 573.5H381 M376 584.5H381 M373 594.5H381 M376 605.5H381 M364 616.5H381 M376 627.5H381 M373 637.5H381 M376 648.5H381 M373 659.5H381 M376 670.5H381 M373 680.5H381 M376 691.5H381 M373 702.5H381 M376 713.5H381 M364 723.5H381 M376 734.5H381 M373 745.5H381 M376 755.5H381 M373 766.5H381 M376 777.5H381 M373 788.5H381 M376 798.5H381 M373 809.5H381 M376 820.5H381 M364 831.5H381 M376 841.5H381 M373 852.5H381 M376 863.5H381 M373 874.5H381 M376 884.5H381 M373 895.5H381 M376 906.5H381 M373 917.5H381 M376 927.5H381 M364 938.5H381 M376 949.5H381" stroke="#d6d6d6" stroke-width="1" fill="none"/><text x="364.2" y="89.8" font-size="12.2" fill="#d0d0d0">0</text><text x="364.2" y="196.8" font-size="12.2" fill="#d0d0d0">1</text><text x="364.2" y="207.9" font-size="12.2" fill="#d0d0d0">0</text><text x="364.2" y="219.0" font-size="12.2" fill="#d0d0d0">0</text><text x="364.2" y="304.8" font-size="12.2" fill="#d0d0d0">2</text><text x="364.2" y="315.9" font-size="12.2" fill="#d0d0d0">0</text><text x="364.2" y="327.0" font-size="12.2" fill="#d0d0d0">0</text><text x="364.2" y="411.8" font-size="12.2" fill="#d0d0d0">3</text><text x="364.2" y="422.9" font-size="12.2" fill="#d0d0d0">0</text><text x="364.2" y="434.0" font-size="12.2" fill="#d0d0d0">0</text><text x="364.2" y="519.8" font-size="12.2" fill="#d0d0d0">4</text><text x="364.2" y="530.9" font-size="12.2" fill="#d0d0d0">0</text><text x="364.2" y="542.0" font-size="12.2" fill="#d0d0d0">0</text><text x="364.2" y="626.8" font-size="12.2" fill="#d0d0d0">5</text><text x="364.2" y="637.9" font-size="12.2" fill="#d0d0d0">0</text><text x="364.2" y="649.0" font-size="12.2" fill="#d0d0d0">0</text><text x="364.2" y="733.8" font-size="12.2" fill="#d0d0d0">6</text><text x="364.2" y="744.9" font-size="12.2" fill="#d0d0d0">0</text><text x="364.2" y="756.0" font-size="12.2" fill="#d0d0d0">0</text><text x="364.2" y="841.8" font-size="12.2" fill="#d0d0d0">7</text><text x="364.2" y="852.9" font-size="12.2" fill="#d0d0d0">0</text><text x="364.2" y="864.0" font-size="12.2" fill="#d0d0d0">0</text><text x="364.2" y="948.8" font-size="12.2" fill="#d0d0d0">8</text><text x="364.2" y="959.9" font-size="12.2" fill="#d0d0d0">0</text><text x="364.2" y="971.0" font-size="12.2" fill="#d0d0d0">0</text></g></svg>
<div class="r" style="left:381px;top:79px;width:1141px;height:878px;background:#7f9bff;"></div>
<svg style="left:0;top:0" width="1539" height="1011"><g transform="translate(563.6,682.1) scale(0.283,-0.283)" fill="#0e32b4" stroke="#000" stroke-width="92" stroke-linejoin="round" paint-order="stroke"><path transform="translate(0,0)" d="M323 0H233V635H10V714H545V635H323Z"/>
<path transform="translate(485,0)" d="M292 546Q361 546 410 516Q460 486 486 432Q513 377 513 304V251H146Q148 160 192 112Q237 65 317 65Q368 65 408 74Q447 84 489 102V25Q448 7 408 -2Q368 -10 313 -10Q237 -10 178 21Q120 52 88 114Q55 175 55 264Q55 352 84 415Q114 478 168 512Q221 546 292 546ZM291 474Q228 474 192 434Q155 393 148 321H421Q421 367 407 401Q393 435 364 454Q336 474 291 474Z"/>
<path transform="translate(1026.5,0)" d="M212 274 27 536H127L265 334L402 536H501L316 274L511 0H411L265 214L117 0H18Z"/>
<path transform="translate(1553,0)" d="M264 62Q284 62 305 66Q326 69 339 73V6Q325 -1 299 -6Q273 -10 249 -10Q207 -10 172 4Q136 19 114 55Q92 91 92 156V468H16V510L93 545L128 659H180V536H335V468H180V158Q180 109 204 86Q227 62 264 62Z"/></g></svg>
<div class="r" style="left:1527px;top:79px;width:8.5px;height:829px;background:#8c8c8c;border:1.4px solid #161616;border-radius:5px"></div>
<div class="r" style="left:381px;top:961px;width:994px;height:10px;background:#8c8c8c;border:2px solid #1a1a1a;border-radius:5px"></div>
<div class="t" style="left:388.4px;top:987.4px;font-size:12.5px;line-height:12.5px;color:#dcdcdc;letter-spacing:0.4px;">20, 454</div>
<div class="r" style="left:461px;top:975px;width:60px;height:33px;background:#2b2b2b;border:1px solid #1e1e1e;border-radius:3px"></div>
<div class="t" style="left:472px;top:987.4px;font-size:12.5px;line-height:12.5px;color:#dcdcdc;letter-spacing:0.4px;">px</div>
<div class="r" style="left:523px;top:975px;width:95px;height:33px;background:#2b2b2b;border:1px solid #1e1e1e;border-radius:3px"></div>
<div class="r" style="left:580px;top:975px;width:1px;height:33px;background:#1e1e1e;"></div>
<div class="t" style="left:536px;top:987.4px;font-size:12.5px;line-height:12.5px;color:#dcdcdc;letter-spacing:0.4px;">107 %</div>
<div class="t" style="left:620px;top:987.4px;font-size:12.5px;line-height:12.5px;color:#dcdcdc;letter-spacing:0.4px;">Text (14.2 MB)</div>
<div class="r" style="left:0px;top:1008px;width:1539px;height:3px;background:linear-gradient(90deg,#1a3a44,#102028 90px,#151515 100px,#151515 1400px,#1e2a2a);"></div>
<svg style="left:0;top:0" width="1" height="1"><path d="M186 398H198L192.0 404.5Z" fill="#e0e0e0"/><path d="M174 502H186L180.0 508.5Z" fill="#e0e0e0"/><path d="M328 556H340L334.0 562.5Z" fill="#e0e0e0"/><path d="M328 602H340L334.0 608.5Z" fill="#e0e0e0"/><path d="M240 726H252L246.0 732.5Z" fill="#e0e0e0"/><path d="M328 875H340L334.0 881.5Z" fill="#e0e0e0"/><path d="M499 989H511L505.0 995.5Z" fill="#e0e0e0"/><path d="M595 989H607L601.0 995.5Z" fill="#e0e0e0"/><rect x="109" y="399.7" width="14" height="2.6" fill="#d00000"/><rect x="134" y="400.0" width="12" height="2" fill="#000"/><rect x="139" y="395.0" width="2" height="12" fill="#000"/><rect x="164" y="728.2" width="14" height="2.6" fill="#d00000"/><rect x="189" y="728.5" width="12" height="2" fill="#000"/><rect x="194" y="723.5" width="2" height="12" fill="#000"/><rect x="301" y="820.7" width="14" height="2.6" fill="#d00000"/><rect x="326" y="821.0" width="12" height="2" fill="#000"/><rect x="331" y="816.0" width="2" height="12" fill="#000"/><rect x="110" y="934.7" width="14" height="2.6" fill="#d00000"/><rect x="135" y="935.0" width="12" height="2" fill="#000"/><rect x="140" y="930.0" width="2" height="12" fill="#000"/><rect x="110" y="964.7" width="14" height="2.6" fill="#d00000"/><rect x="135" y="965.0" width="12" height="2" fill="#000"/><rect x="140" y="960.0" width="2" height="12" fill="#000"/></svg>
<svg style="left:0;top:0" width="1539" height="1011" font-family="Liberation Sans"><clipPath id="wclip"><rect x="0" y="21" width="356" height="28"/></clipPath><g clip-path="url(#wclip)"><path d="M17.8 49Q22 27 36.5 21H335.7L331 49Z" fill="#474747"/><path d="M28 49V41Q28 28.1 43.5 28.1Q59 28.1 59 41V49Z" fill="#3c3c3c"/><path d="M64.6 21H96.5L92.7 45.3Z" fill="#3c3c3c"/><circle cx="126" cy="35" r="27.5" fill="#3c3c3c"/><circle cx="134.3" cy="37.5" r="12.3" fill="#474747"/><circle cx="197.5" cy="35" r="40" fill="#3c3c3c"/><circle cx="207.6" cy="41" r="20" fill="#474747"/></g><path d="M190 230.5H197.3V237.5" fill="none" stroke="#dcdcdc" stroke-width="1.8"/><path d="M187.2 230.5L191.2 227.2V233.8Z" fill="#dcdcdc"/><path d="M193.8 236.5H200.8L197.3 240.5Z" fill="#dcdcdc"/><rect x="157.5" y="258.5" width="6.5" height="6.5" fill="#000" stroke="#eee" stroke-width="1"/><rect x="162" y="263" width="7" height="7" fill="#f4f4f4"/><path d="M15 313.5L18 307M27 313.5L24 307M14.5 311H27.5" stroke="#d89a30" stroke-width="1.4" fill="none"/><circle cx="20.8" cy="298.8" r="1.3" fill="#d89a30"/><rect x="13.5" y="300" width="15.4" height="8.4" fill="#eeeeec" stroke="#aaa" stroke-width="0.6"/><circle cx="54.8" cy="301.9" r="3.8" fill="#4a88dd" stroke="#1a4a90" stroke-width="0.7"/><rect x="54.3" y="299.8" width="1" height="4.2" fill="#fff"/><path d="M55.5 312L65.5 298.5" stroke="#444" stroke-width="3" stroke-linecap="round"/><path d="M55.5 312L65.5 298.5" stroke="#bbb" stroke-width="1.8" stroke-linecap="round"/><path d="M94 301Q94 298.5 97 298.5H101Q104.5 298.5 104.5 301.5Q104.5 304 102 304.5" fill="none" stroke="#b89a20" stroke-width="1.6"/><path d="M96 297.5L93.5 299.5L96 301.5" fill="none" stroke="#b89a20" stroke-width="1.6"/><path d="M91 306.5H98.5Q102 306.5 102 309.5Q102 312.5 99.5 313" fill="none" stroke="#f0d000" stroke-width="2"/><path d="M94.5 303L90.5 306.5L94.5 310" fill="none" stroke="#f0d000" stroke-width="2"/><rect x="127.5" y="298" width="12" height="9.5" fill="#5a7ab8" stroke="#888" stroke-width="0.6"/><rect x="127.5" y="303" width="12" height="4.5" fill="#a8c0e0"/><rect x="131.5" y="303.8" width="11.5" height="10" fill="#d89030" stroke="#888" stroke-width="0.7"/><rect x="131.8" y="304" width="11" height="4" fill="#a07030"/><path d="M137 313V307M137 309L139.5 306M137 310L134.5 307.5" stroke="#222" stroke-width="0.7"/><rect x="335.5" y="300.5" width="11" height="11" rx="2" fill="#222" stroke="#dcdcdc" stroke-width="1"/><path d="M343.5 302.8V309.2L337.8 306Z" fill="#dcdcdc"/><rect x="3" y="345.5" width="38" height="37" rx="3" fill="#2a2a2a"/><rect x="5" y="347" width="34" height="34" fill="#000"/><rect x="6" y="348" width="32" height="32" fill="#fff"/><text x="7.6" y="372" font-size="22.5" fill="#000">A</text><text x="22.6" y="372" font-size="21.5" fill="#000">α</text><rect x="108.5" y="646.5" width="38.5" height="34.5" rx="3" fill="#2a2a2a"/><rect x="110" y="648" width="35.5" height="31.5" fill="#000"/><rect x="111" y="649" width="33.5" height="29.5" fill="#4a4a4a"/><path d="M116.5 674V664Q116.5 660 120 659.5L124 658.5" fill="none" stroke="#777" stroke-width="3" stroke-linecap="round"/><path d="M121 660L133 655.5L141 667.5L130.5 677Z" fill="#8a8a8a"/><path d="M131.5 649V661" stroke="#8a8a8a" stroke-width="3" stroke-linecap="round"/><path d="M131.5 649.5V660" stroke="#4a4a4a" stroke-width="0.8"/><path d="M327 661.5L331 663L333.5 662L333 665" stroke="#aaa" stroke-width="1" fill="none"/><circle cx="332.5" cy="666" r="1.2" fill="#c02020"/><rect x="110" y="758.5" width="12" height="10" fill="#6a9ad8"/><rect x="115.3" y="757" width="1.6" height="13" fill="#fff"/><path d="M140 770.3V761Q140 755.2 145.9 755.2Q151.8 755.2 151.8 761V770.3Z" fill="#6a9ad8"/><rect x="145.1" y="762" width="1.6" height="8.3" fill="#fff"/><rect x="169.8" y="755.2" width="12" height="15" fill="#6a9ad8"/><rect x="175" y="762" width="1.6" height="8.3" fill="#fff"/><path d="M108.2 799.7V783.7H124V791H115.5V799.7Z" fill="#6a9ad8"/><path d="M112.2 799.7V787.5H124" fill="none" stroke="#fff" stroke-width="1.6"/><path d="M137.9 799.7Q137.9 783.7 154.2 783.7V791Q145.4 791 145.4 799.7Z" fill="#6a9ad8"/><path d="M141.8 799.7Q141.8 787.5 154.2 787.5" fill="none" stroke="#fff" stroke-width="1.6"/><path d="M168.1 799.7V792L176.4 783.7H184.1V791H178L175.4 793.6V799.7Z" fill="#6a9ad8"/><path d="M172 799.7V793.5L178 787.5H184.1" fill="none" stroke="#fff" stroke-width="1.6"/><rect x="127.3" y="847.3" width="191.4" height="7.4" fill="#8c8c8c"/><rect x="174.5" y="847.3" width="96.1" height="7.4" fill="#dcdcdc"/><path d="M130.3 850H131.3 M134.3 850H135.3 M138.3 850H139.3 M142.4 850H143.4 M146.4 850H147.4 M150.4 850H151.4 M154.4 850H155.4 M158.4 850H159.4 M162.5 850H163.5 M166.5 850H167.5 M170.5 850H171.5 M174.5 850H175.5 M275.0 850H276.0 M279.0 850H280.0 M283.1 850H284.1 M287.1 850H288.1 M291.1 850H292.1 M295.1 850H296.1 M299.1 850H300.1 M303.2 850H304.2 M307.2 850H308.2 M311.2 850H312.2 M315.2 850H316.2" stroke="#cfcfcf" stroke-width="1.2"/><path d="M151.0 845V857 M175.0 845V857 M199.1 845V857 M223.1 845V857 M247.2 845V857 M271.1 845V857 M295.1 845V857" stroke="#d0d0d0" stroke-width="1"/><path d="M117.5 845.5L111 851L117.5 856.5M327 845.5L333.5 851L327 856.5" fill="none" stroke="#e8e8e8" stroke-width="2.4"/><rect x="54.1" y="899.8" width="15.8" height="2" fill="#000"/><rect x="54.1" y="903.9" width="12.8" height="2" fill="#000"/><rect x="54.1" y="907.9" width="15.8" height="2" fill="#000"/><rect x="54.1" y="911.9" width="9.8" height="2" fill="#000"/><rect x="84.3" y="899.8" width="15.8" height="2" fill="#000"/><rect x="90.1" y="903.9" width="10.0" height="2" fill="#000"/><rect x="84.3" y="907.9" width="15.8" height="2" fill="#000"/><rect x="90.1" y="911.9" width="10.0" height="2" fill="#000"/><rect x="114.2" y="899.8" width="15.8" height="2" fill="#000"/><rect x="117.4" y="903.9" width="9.3" height="2" fill="#000"/><rect x="114.2" y="907.9" width="15.8" height="2" fill="#000"/><rect x="119.3" y="911.9" width="5.5" height="2" fill="#000"/><rect x="144.1" y="899.8" width="15.8" height="2" fill="#000"/><rect x="144.1" y="903.9" width="15.8" height="2" fill="#000"/><rect x="144.1" y="907.9" width="15.8" height="2" fill="#000"/><rect x="144.1" y="911.9" width="15.8" height="2" fill="#000"/><path d="M30.4 929.4H45M35.9 933.6H45M35.9 937.9H45M30.4 942.2H45" stroke="#000" stroke-width="1.4"/><path d="M29.5 932.6L34 936L29.5 939.5" fill="none" stroke="#f07020" stroke-width="1.5"/><path d="M35.9 959.2H45M35.9 963.6H45M35.9 968H45M35.9 972.4H45" stroke="#000" stroke-width="1.4"/><path d="M32 960V972" stroke="#000" stroke-width="1.6"/><path d="M29.5 961L32 958.5L34.5 961M29.5 971L32 973.5L34.5 971" fill="none" stroke="#f07020" stroke-width="1.4"/><path d="M39 995L40.5 991H50L51.5 995Z" fill="#bfbfbf"/><rect x="37.3" y="995" width="15.5" height="8" fill="#d8d8d8"/><rect x="37.3" y="1000" width="15.5" height="3" fill="#9a9a9a"/><path d="M43.5 987V992H40.8L45 996.5L49.2 992H46.5V987Z" fill="#6cd020"/><path d="M129.5 994Q129.5 989 134.5 989Q140 989 140 995Q140 1002 134 1002Q131 1002 129.5 1000" fill="none" stroke="#b0804a" stroke-width="2"/><path d="M127 992L129.5 996.5L133 993Z" fill="#b0804a"/><path d="M217.5 989.5L228.5 1000.5M228.5 989.5L217.5 1000.5" stroke="#902020" stroke-width="2.6"/><path d="M307 993Q308 989 312 989Q317.5 989.5 317.5 995Q317.5 1000.5 312 1001" fill="none" stroke="#f8c000" stroke-width="1.8"/><path d="M303.5 993L308 996.5L310.5 992Z" fill="#f8a000"/><circle cx="306.5" cy="1000.3" r="2.2" fill="#3a6ab8"/><path d="M0 979.5H345" stroke="#8a8a8a" stroke-width="1" stroke-dasharray="5 5"/><rect x="364.5" y="62.5" width="14" height="14" rx="2.5" fill="#222" stroke="#dcdcdc" stroke-width="1.2"/><path d="M368.5 66V73L375 69.5Z" fill="#eee"/><rect x="1523.8" y="62.8" width="16" height="14.6" fill="#4a4a4a" stroke="#1a1a1a" stroke-width="1.4"/><circle cx="1531" cy="69.8" r="4.1" fill="#555" stroke="#3a78d0" stroke-width="2.2"/><circle cx="1531" cy="69.8" r="2.9" fill="none" stroke="#c8d8f0" stroke-width="0.8"/><rect x="364" y="958.2" width="16" height="16" fill="#cfcfc8" stroke="#999" stroke-width="0.6"/><rect x="367.5" y="961.5" width="9" height="9" fill="#444"/><rect x="368.5" y="962.5" width="7" height="7" fill="#3a3a3a"/><path d="M365.5 959.8H378.5M365.5 972.6H378.5M365.6 960V972.5M378.4 960V972.5" stroke="#555" stroke-width="1" stroke-dasharray="1 1"/><path d="M1530.5 961.5V973.5M1524.5 967.5H1536.5" stroke="#eee" stroke-width="1"/><path d="M1530.5 964.5V970.5M1527.5 967.5H1533.5" stroke="#fff" stroke-width="1.6"/><path d="M396 72.7H407L401.5 78.8Z" fill="#e0e0e0"/><path d="M375 560.2V570.5L381 565.4Z" fill="#e0e0e0"/><g fill="#9a9a9a"><circle cx="359.5" cy="509.8" r="1.5"/><circle cx="359.5" cy="514.8" r="1.5"/><circle cx="359.5" cy="519.7" r="1.5"/></g><rect x="1513.6" y="984.1" width="14.8" height="15.1" fill="#b0b0b0" stroke="#c8c8c8" stroke-width="0.8"/><rect x="1515.5" y="986" width="11" height="11.2" fill="#8a8a8a"/><rect x="1516.3" y="987.3" width="1.4" height="1.4" fill="#c8b020" fill-opacity="0.35"/><rect x="1516.3" y="989.8" width="1.4" height="1.4" fill="#c8b020" fill-opacity="0.55"/><rect x="1516.3" y="992.3" width="1.4" height="1.4" fill="#c8b020" fill-opacity="0.75"/><rect x="1516.3" y="994.8" width="1.4" height="1.4" fill="#c8b020" fill-opacity="0.95"/><rect x="1518.8999999999999" y="987.3" width="1.4" height="1.4" fill="#20b0c0" fill-opacity="0.35"/><rect x="1518.8999999999999" y="989.8" width="1.4" height="1.4" fill="#20b0c0" fill-opacity="0.55"/><rect x="1518.8999999999999" y="992.3" width="1.4" height="1.4" fill="#20b0c0" fill-opacity="0.75"/><rect x="1518.8999999999999" y="994.8" width="1.4" height="1.4" fill="#20b0c0" fill-opacity="0.95"/><rect x="1521.5" y="987.3" width="1.4" height="1.4" fill="#c020c0" fill-opacity="0.35"/><rect x="1521.5" y="989.8" width="1.4" height="1.4" fill="#c020c0" fill-opacity="0.55"/><rect x="1521.5" y="992.3" width="1.4" height="1.4" fill="#c020c0" fill-opacity="0.75"/><rect x="1521.5" y="994.8" width="1.4" height="1.4" fill="#c020c0" fill-opacity="0.95"/><rect x="1524.1" y="987.3" width="1.4" height="1.4" fill="#111" fill-opacity="0.35"/><rect x="1524.1" y="989.8" width="1.4" height="1.4" fill="#111" fill-opacity="0.55"/><rect x="1524.1" y="992.3" width="1.4" height="1.4" fill="#111" fill-opacity="0.75"/><rect x="1524.1" y="994.8" width="1.4" height="1.4" fill="#111" fill-opacity="0.95"/></svg>
<svg style="left:0;top:0" width="360" height="640"><path d="M3 575H350V624H8" fill="none" stroke="#ff0000" stroke-width="5.5" stroke-dasharray="6 6"/><path d="M3 575V620" fill="none" stroke="#ff0000" stroke-width="5.5" stroke-dasharray="6 6"/></svg>
</body></html>
